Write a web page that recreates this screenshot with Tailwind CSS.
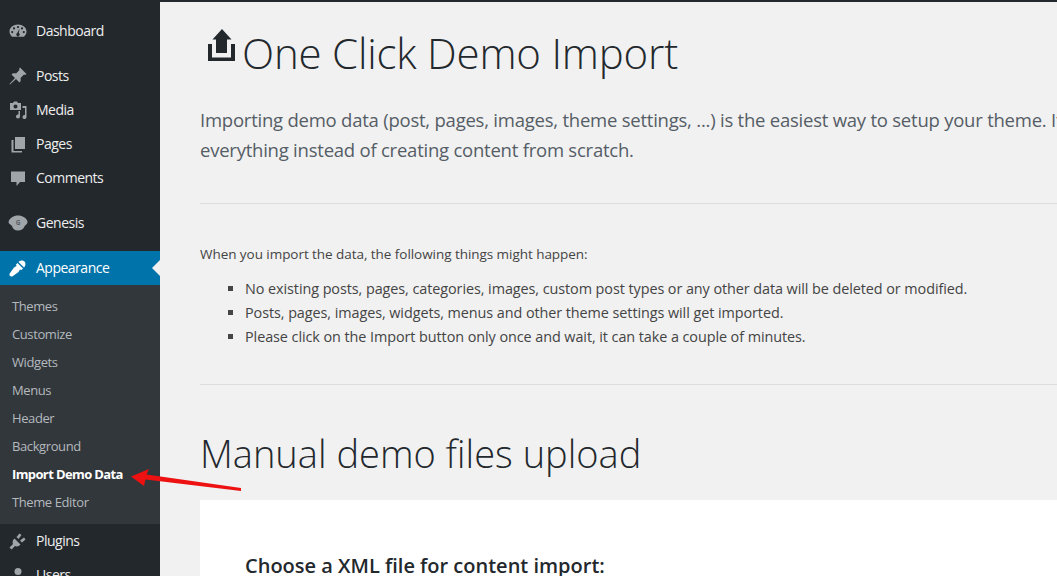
<!doctype html>
<html>
<head>
<meta charset="utf-8">
<script src="https://cdn.jsdelivr.net/npm/@tailwindcss/browser@4"></script>
</head>
<body class="m-0 h-[576px] w-[1057px] overflow-hidden bg-[#f1f1f1] font-['Open_Sans',sans-serif]">
<div class="relative flex h-[576px] w-[1057px] overflow-hidden">
  <aside class="h-[576px] w-[160px] shrink-0 overflow-hidden bg-[#23282d] pt-[14px] text-[14px] tracking-[-0.5px] text-[#eeeeee]">
    <div class="flex h-[34px] items-center"><svg class="ml-[9px] mr-[9px] h-[18px] w-[18px]" viewBox="0 0 18 18" fill="#a0a5aa"><path fill-rule="evenodd" d="M9 2.500c-4.700 0-8.500 3-8.500 7 0 2 1 3.900 2.500 5.200h12c1.500-1.300 2.500-3.200 2.500-5.200 0-4-3.800-7-8.500-7zM9 4a1.100 1.100 0 1 1 0 2.200A1.100 1.100 0 0 1 9 4zM5 5.300a1.100 1.100 0 1 1 0 2.200 1.100 1.100 0 0 1 0-2.200zm8 0a1.100 1.100 0 1 1 0 2.200 1.100 1.100 0 0 1 0-2.200zM3.200 9a1.100 1.100 0 1 1 0 2.200 1.100 1.100 0 0 1 0-2.200zm11.600 0a1.100 1.100 0 1 1 0 2.200 1.100 1.100 0 0 1 0-2.200zM10.500 6.800l-.6 4.300a1.700 1.700 0 1 1-1.700-.1z"/></svg><span class="mb-[2px]">Dashboard</span></div>
    <div class="h-[11px]"></div>
    <div class="flex h-[34px] items-center"><svg class="ml-[9px] mr-[9px] h-[18px] w-[18px]" viewBox="0 0 18 18" fill="#a0a5aa"><path d="M11 .5L17.500 7 16 8 15 7.500 11.500 11C12.200 13 11.500 14.500 10.500 15.500L7 12 1 17.500.5 17 6 11 2.500 7.500C3.500 6.500 5 5.800 7 6.500L10.500 3 10 2Z"/></svg><span class="mb-[2px]">Posts</span></div>
    <div class="flex h-[34px] items-center"><svg class="ml-[9px] mr-[9px] h-[18px] w-[18px]" viewBox="0 0 18 18" fill="#a0a5aa"><path fill-rule="evenodd" d="M1 2h3l1-1.500h3L9 2h3v7H1zM6.500 3.500a2 2 0 1 0 0 4 2 2 0 0 0 0-4z"/><path d="M13.500 5H17.500v11a2 2 0 1 1-1.500-1.900V7h-2.500zM11 10v5.500a2 2 0 1 1-1.500-1.900V10z"/></svg><span class="mb-[2px]">Media</span></div>
    <div class="flex h-[34px] items-center"><svg class="ml-[9px] mr-[9px] h-[18px] w-[18px]" viewBox="0 0 18 18" fill="#a0a5aa"><path d="M6 2h10v12H6z"/><path d="M2.500 5H4.500v11H13v1.500H2.500z"/></svg><span class="mb-[2px]">Pages</span></div>
    <div class="flex h-[34px] items-center"><svg class="ml-[9px] mr-[9px] h-[18px] w-[18px]" viewBox="0 0 18 18" fill="#a0a5aa"><path d="M2 2.500h14v10.500h-5l-3.500 4V13H2z"/></svg><span class="mb-[2px]">Comments</span></div>
    <div class="h-[11px]"></div>
    <div class="flex h-[34px] items-center"><svg class="ml-[8px] mr-[8px] h-[20px] w-[20px]" viewBox="0 0 20 20"><path fill="#a0a5aa" d="M.5 9C1.500 5 5.500 2.500 10 2.500c4.500 0 8.500 2.500 9.500 6 .3 3-2.500 3.500-3 5-1 2.500-3.500 4-6.500 4-3.500 0-5.500-2-6-4.500C3 11.500.5 11 .5 9z"/><text x="10" y="12.200" text-anchor="middle" font-size="6.500" font-weight="700" font-family="Open Sans" letter-spacing="0" fill="#5a5f64">G</text></svg><span class="mb-[2px]">Genesis</span></div>
    <div class="h-[11px]"></div>
    <div class="relative flex h-[34px] items-center bg-[#0073aa] text-white"><svg class="ml-[9px] mr-[9px] h-[18px] w-[18px]" viewBox="0 0 18 18" fill="#ffffff"><path d="M9.500 3L15 8.500C16.500 7 17 4 15.500 2.500 14 1 11 1.500 9.500 3Z"/><path d="M8.500 4L14 9.500 12.500 11 11 10.500 9.500 13 4 17C3 17.800 1.500 17.500 1 17 .5 16.500.2 15 1 14L5 8.500 7.500 7 7 5.500Z"/></svg><span class="mb-[2px]">Appearance</span><span class="absolute right-0 top-[9px] h-0 w-0 border-y-[8px] border-r-[8px] border-y-transparent border-r-[#f1f1f1]"></span></div>
    <div class="bg-[#32373c] pb-[7px] pt-[8px] text-[13px] tracking-[-0.4px] text-[#b4b9be]">
      <div class="flex h-[28px] items-center pl-[12px]">Themes</div>
      <div class="flex h-[28px] items-center pl-[12px]">Customize</div>
      <div class="flex h-[28px] items-center pl-[12px]">Widgets</div>
      <div class="flex h-[28px] items-center pl-[12px]">Menus</div>
      <div class="flex h-[28px] items-center pl-[12px]">Header</div>
      <div class="flex h-[28px] items-center pl-[12px]">Background</div>
      <div class="flex h-[28px] items-center pl-[12px] font-bold tracking-[-0.62px] text-white">Import Demo Data</div>
      <div class="flex h-[28px] items-center pl-[12px]">Theme Editor</div>
    </div>
    <div class="flex h-[34px] items-center"><svg class="ml-[9px] mr-[9px] h-[18px] w-[18px]" viewBox="0 0 18 18" fill="#a0a5aa"><path d="M5.500 6.500L11.500 12.500C10 14.500 7.500 14.800 6 14L2.500 17.500.5 15.500 4 12C3.200 10.500 3.500 8 5.500 6.500Z"/><path d="M7.500 5L10.500 1.500 12.500 3 9.500 7Z"/><path d="M11 8.500L15 5.500 16.500 7.500 13 10.500Z"/></svg><span class="mb-[2px]">Plugins</span></div>
    <div class="flex h-[34px] items-center"><svg class="ml-[9px] mr-[9px] h-[18px] w-[18px]" viewBox="0 0 18 18" fill="#a0a5aa"><circle cx="9" cy="5.500" r="3.500"/><path d="M2.500 16c0-4 3-6 6.500-6s6.500 2 6.500 6z"/></svg><span class="mb-[2px]">Users</span></div>
  </aside>
  <main class="min-w-0 flex-1 overflow-hidden border-t-2 border-[#23282d] pl-[40px] text-[#444444]">
    <h1 class="flex h-[76px] w-[900px] items-center pt-[26px] text-[42px] font-light leading-[50px] text-[#23282d]">
      <svg class="ml-[5px] mr-[7px] mt-[-16px] h-[36px] w-[30px] shrink-0" viewBox="0 0 30 36" fill="#23282d"><path d="M17 2l9.500 10.500H22V26H11V12.500H7.500z"/><path d="M3 17h4v13.500h19V17h4v17H3z"/></svg>
      <span class="tracking-[-0.2px]">One Click Demo Import</span>
    </h1>
    <p class="mt-[27px] w-[1000px] whitespace-nowrap text-[18.5px] leading-[30px] tracking-[-0.23px] text-[#555d66]">Importing demo data (post, pages, images, theme settings, ...) is the easiest way to setup your theme. It will allow you to quickly edit<br>everything instead of creating content from scratch.</p>
    <hr class="mt-[38px] w-[1000px] border-t border-[#dddddd]">
    <p class="mt-[40px] w-[900px] text-[13.5px] leading-[20px] tracking-[-0.05px]">When you import the data, the following things might happen:</p>
    <ul class="mt-[13px] w-[900px] list-[square] pl-[45px] text-[14.4px] leading-[24px] tracking-[-0.07px] marker:text-[#444444]">
      <li>No existing posts, pages, categories, images, custom post types or any other data will be deleted or modified.</li>
      <li>Posts, pages, images, widgets, menus and other theme settings will get imported.</li>
      <li>Please click on the Import button only once and wait, it can take a couple of minutes.</li>
    </ul>
    <hr class="mt-[35px] w-[1000px] border-t border-[#dddddd]">
    <h2 class="mt-[43px] w-[900px] text-[38px] font-light leading-[50px] text-[#23282d]">Manual demo files upload</h2>
    <section class="mt-[22px] h-[200px] w-[1000px] bg-white pl-[45px] pt-[53px]">
      <h3 class="text-[20px] font-semibold leading-[26px] text-[#23282d]">Choose a XML file for content import:</h3>
    </section>
  </main>
  <svg class="absolute left-[125px] top-[465px] h-[35px] w-[125px]" viewBox="0 0 125 35" fill="#ee1111"><path d="M6 11.500 L24 4 L21.500 9.500 L116 23 L116 26 L20.500 14.500 L19 21z"/></svg>
</div>
</body>
</html>
